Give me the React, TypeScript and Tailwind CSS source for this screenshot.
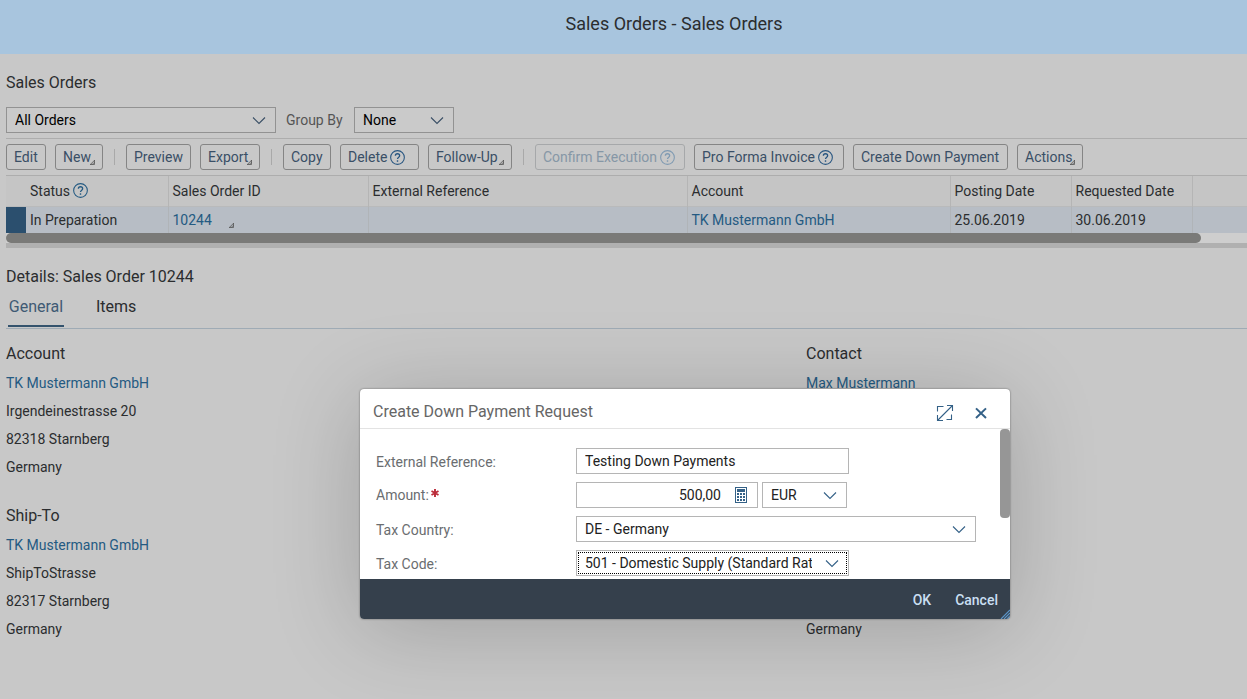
import React from "react";

function Chevron({ className = "" }: { className?: string }) {
  return (
    <svg className={`pointer-events-none absolute top-2 h-2.5 w-3.5 ${className}`} viewBox="0 0 14 10" fill="none" stroke="currentColor" strokeWidth="1.1" aria-hidden="true">
      <path d="M1 2.5l6 6 6-6" />
    </svg>
  );
}

function Help({ className = "" }: { className?: string }) {
  return (
    <svg className={`h-[15px] w-[15px] shrink-0 ${className}`} viewBox="0 0 14 14" fill="none" stroke="currentColor" aria-hidden="true">
      <circle cx="7" cy="7" r="6.4" strokeWidth="1" />
      <path d="M5 5.4C5 4.1 5.9 3.5 7 3.5s2 .7 2 1.8c0 1.4-2 1.5-2 3.2" strokeWidth="1.2" />
      <path d="M7 9.6v1.4" strokeWidth="1.3" />
    </svg>
  );
}

function MenuMark({ className = "" }: { className?: string }) {
  return (
    <svg className={`h-[5px] w-[5px] ${className}`} viewBox="0 0 5 5" fill="none" stroke="currentColor" aria-hidden="true">
      <path d="M0 4.5h4.5V0M0 4.8L4.8 0M2.2 4.5L4.5 2.2" strokeWidth="0.8" />
    </svg>
  );
}

type ToolProps = { label: string; width: string; menu?: boolean; help?: boolean; disabled?: boolean };

function Tool({ label, width, menu, help, disabled }: ToolProps) {
  return (
    <button
      type="button"
      disabled={disabled}
      className={`relative flex h-[26px] shrink-0 items-center gap-[3px] whitespace-nowrap rounded-[3px] border pl-[7px] ${width} ${
        disabled ? "border-[#a6a8aa] text-[#8697a6]" : "border-[#858585] text-[#3a4f66]"
      }`}
    >
      {label}
      {help && <Help className={disabled ? "text-[#7f9ab2]" : "text-[#275580]"} />}
      {menu && <MenuMark className="absolute bottom-1 right-[7px] text-[#555]" />}
    </button>
  );
}

function Separator() {
  return <span className="mx-[2px] h-4 w-px shrink-0 bg-[#a9a9a9]" />;
}

const columns = [
  "Sales Order ID",
  "External Reference",
  "Account",
  "Posting Date",
  "Requested Date",
];

function Address({ title, link, lines }: { title: string; link: string; lines: string[] }) {
  return (
    <section>
      <h3 className="text-base leading-[30px]">{title}</h3>
      <a href="#account" className="block leading-7 text-[#245a82]">{link}</a>
      {lines.map((line) => (
        <p key={line} className="leading-7">{line}</p>
      ))}
    </section>
  );
}

const field = "block h-[26px] w-full appearance-none rounded-none border border-[#b5b5b5] bg-white pl-2 text-[#222] outline-none";
const formLabel = "w-[200px] shrink-0 pt-0.5 text-[#6a6d70]";

function Dialog() {
  return (
    <div
      role="dialog"
      aria-label="Create Down Payment Request"
      className="absolute left-[360px] top-[389px] flex w-[650px] flex-col overflow-hidden rounded bg-white shadow-[0_0_2px_rgba(0,0,0,0.5),0_10px_90px_rgba(0,0,0,0.2)]"
    >
      <header className="flex h-10 items-center border-b border-[#e3e3e3] pl-[13px] pr-[21px] pt-2">
        <h2 className="grow pb-0.5 text-base text-[#666]">Create Down Payment Request</h2>
        <button type="button" aria-label="Maximize" className="mr-[19px] text-[#346187]">
          <svg className="block h-[18px] w-[18px]" viewBox="0 0 18 18" fill="none" stroke="currentColor" strokeWidth="1.1" aria-hidden="true">
            <path d="M1.5 16.5l15-15M11 1.5h5.5V7M1.5 11v5.5H7M1.5 7.5V2.5H7.5M15.5 10.5v5h-5" />
          </svg>
        </button>
        <button type="button" aria-label="Close" className="text-[#346187]">
          <svg className="block h-4 w-4" viewBox="0 0 16 16" fill="none" stroke="currentColor" strokeWidth="2" aria-hidden="true">
            <path d="M3 3.4l10 9.6M13 3.4L3 13" />
          </svg>
        </button>
      </header>

      <form className="relative flex h-[150px] flex-col gap-2 overflow-hidden pl-4 pt-[19px]">
        <div className="flex items-center">
          <label htmlFor="reference" className={formLabel}>External Reference:</label>
          <div className="w-[273px]">
            <input id="reference" className={field} defaultValue="Testing Down Payments" />
          </div>
        </div>
        <div className="flex items-center">
          <label htmlFor="amount" className="flex w-[200px] shrink-0 items-center gap-px text-[#6a6d70]">
            Amount:
            <svg className="mb-1 h-2.5 w-2.5 text-[#bb2d3b]" viewBox="0 0 10 10" stroke="currentColor" strokeWidth="1.9" aria-hidden="true">
              <path d="M5 1v8M1.5 3l7 4M8.5 3l-7 4" />
            </svg>
          </label>
          <div className="relative w-[182px]">
            <input id="amount" className={`${field} pr-9 text-right`} defaultValue="500,00" />
            <svg className="absolute right-[11px] top-[5px] h-4 w-3 text-[#346187]" viewBox="0 0 12 16" fill="currentColor" aria-hidden="true">
              <path d="M0 0h12v16H0zM1 1v14h10V1z" fillRule="evenodd" />
              <path d="M2 2h8v3H2zM2 6h2v2H2zM5 6h2v2H5zM8 6h2v2H8zM2 9h2v2H2zM5 9h2v2H5zM8 9h2v2H8zM2 12h2v2H2zM5 12h2v2H5zM8 12h2v2H8z" />
            </svg>
          </div>
          <div className="relative ml-1 w-[85px]">
            <select aria-label="Currency" className={field}><option>EUR</option></select>
            <Chevron className="right-2.5 text-[#346187]" />
          </div>
        </div>
        <div className="flex items-center">
          <label htmlFor="country" className={formLabel}>Tax Country:</label>
          <div className="relative w-[400px]">
            <select id="country" className={field}><option>DE - Germany</option></select>
            <Chevron className="right-2.5 text-[#346187]" />
          </div>
        </div>
        <div className="flex items-center">
          <label htmlFor="code" className={formLabel}>Tax Code:</label>
          <div className="relative w-[273px]">
            <select id="code" className={`${field} pr-9`}><option>501 - Domestic Supply (Standard Rate)</option></select>
            <span className="pointer-events-none absolute inset-0.5 border border-dotted border-black" />
            <Chevron className="right-2.5 text-[#346187]" />
          </div>
        </div>
        <span className="absolute right-0 top-0 h-[89px] w-2.5 rounded bg-[#969696]" />
      </form>

      <footer className="relative flex h-10 items-center justify-end gap-6 bg-[#35404c] pr-3 pt-0.5 font-medium text-[#c9dff2]">
        <button type="button">OK</button>
        <button type="button">Cancel</button>
        <svg className="absolute bottom-0 right-0 h-2.5 w-2.5 text-[#5b93c5]" viewBox="0 0 10 10" stroke="currentColor" strokeWidth="1.2" aria-hidden="true">
          <path d="M1 10l9-9M4 10l6-6M7 10l3-3" />
        </svg>
      </footer>
    </div>
  );
}

export default function App() {
  return (
    <div className="relative min-h-screen overflow-hidden bg-[#c8c8c8] font-['Roboto',sans-serif] text-sm leading-5 text-[#2b2d2f]">
      <header className="flex h-[54px] items-center justify-center bg-[#a8c5de] pb-1.5 pl-[101px]">
        <h1 className="text-lg">Sales Orders - Sales Orders</h1>
      </header>

      <main className="pl-1.5">
        <h2 className="pt-[19px] text-base leading-5">Sales Orders</h2>

        <div className="mt-3.5 flex items-center">
          <div className="relative w-[270px]">
            <select aria-label="View" className="block h-[26px] w-full appearance-none border border-[#929292] bg-[#cacaca] pl-2 text-black"><option>All Orders</option></select>
            <Chevron className="right-2.5 text-[#3a4f66]" />
          </div>
          <label htmlFor="group" className="w-[78px] pl-2.5 text-[#555]">Group By</label>
          <div className="relative w-[100px]">
            <select id="group" className="block h-[26px] w-full appearance-none border border-[#929292] bg-[#cacaca] pl-2 text-black"><option>None</option></select>
            <Chevron className="right-2.5 text-[#3a4f66]" />
          </div>
        </div>

        <div className="mt-[5px] flex h-[38px] items-center gap-[9px] border-y border-[#adadad]">
          <Tool label="Edit" width="w-10" />
          <Tool label="New" width="w-12" menu />
          <Separator />
          <Tool label="Preview" width="w-[65px]" />
          <Tool label="Export" width="w-[60px]" menu />
          <Separator />
          <Tool label="Copy" width="w-12" />
          <Tool label="Delete" width="w-[79px]" help />
          <Tool label="Follow-Up" width="w-[84px]" menu />
          <Separator />
          <Tool label="Confirm Execution" width="w-[150px]" help disabled />
          <Tool label="Pro Forma Invoice" width="w-[150px]" help />
          <Tool label="Create Down Payment" width="w-[155px]" />
          <Tool label="Actions" width="w-[66px]" menu />
        </div>

        <table className="w-full table-fixed border-collapse text-left">
          <colgroup>
            <col className="w-5" />
            <col className="w-[142px]" />
            <col className="w-[200px]" />
            <col className="w-[319px]" />
            <col className="w-[263px]" />
            <col className="w-[121px]" />
            <col className="w-[121px]" />
            <col />
          </colgroup>
          <thead>
            <tr className="h-[30px] border-b border-[#b9babb] bg-[#c5c5c5]">
              <th />
              <th className="border-r border-[#b5b5b5] pl-1 font-normal">
                <span className="flex items-center gap-[3px]">Status <Help className="text-[#245a82]" /></span>
              </th>
              {columns.map((name) => (
                <th key={name} className="border-r border-[#b5b5b5] pl-1 font-normal">{name}</th>
              ))}
              <th />
            </tr>
          </thead>
          <tbody>
            <tr className="h-[27px] bg-[#b7bdc5]">
              <td className="bg-[#2b4f6e]" />
              <td className="border-r border-[#b0b4b8] pl-1">In Preparation</td>
              <td className="border-r border-[#b0b4b8] pl-1">
                <span className="flex items-end gap-[17px]"><a href="#order" className="text-[#245a82]">10244</a><MenuMark className="mb-0.5 text-[#555]" /></span>
              </td>
              <td className="border-r border-[#b0b4b8]" />
              <td className="border-r border-[#b0b4b8] pl-1"><a href="#account" className="text-[#245a82]">TK Mustermann GmbH</a></td>
              <td className="border-r border-[#b0b4b8] pl-1">25.06.2019</td>
              <td className="border-r border-[#b0b4b8] pl-1">30.06.2019</td>
              <td />
            </tr>
          </tbody>
        </table>
        <div className="h-[15px] border-b-[5px] border-[#b0b0b0] bg-[#cecece] pr-[46px]">
          <div className="h-2.5 rounded-[5px] bg-[#7a7a78]" />
        </div>

        <h2 className="mt-[19px] text-base leading-5">Details: Sales Order 10244</h2>
        <nav className="flex gap-8 border-b border-[#9fabb5] pb-px pl-0.5 pt-2 text-base">
          <button type="button" className="h-8 min-w-14 border-b-2 border-[#34536d] pb-2 text-[#3f5a74]">General</button>
          <button type="button" className="h-8 border-b-2 border-transparent pb-2">Items</button>
        </nav>

        <div className="flex pt-2.5">
          <div className="flex w-[800px] shrink-0 flex-col gap-5">
            <Address title="Account" link="TK Mustermann GmbH" lines={["Irgendeinestrasse 20", "82318 Starnberg", "Germany"]} />
            <Address title="Ship-To" link="TK Mustermann GmbH" lines={["ShipToStrasse", "82317 Starnberg", "Germany"]} />
          </div>
          <div className="flex grow flex-col justify-between">
            <Address title="Contact" link="Max Mustermann" lines={[]} />
            <p className="leading-7">Germany</p>
          </div>
        </div>
      </main>

      <Dialog />
    </div>
  );
}
